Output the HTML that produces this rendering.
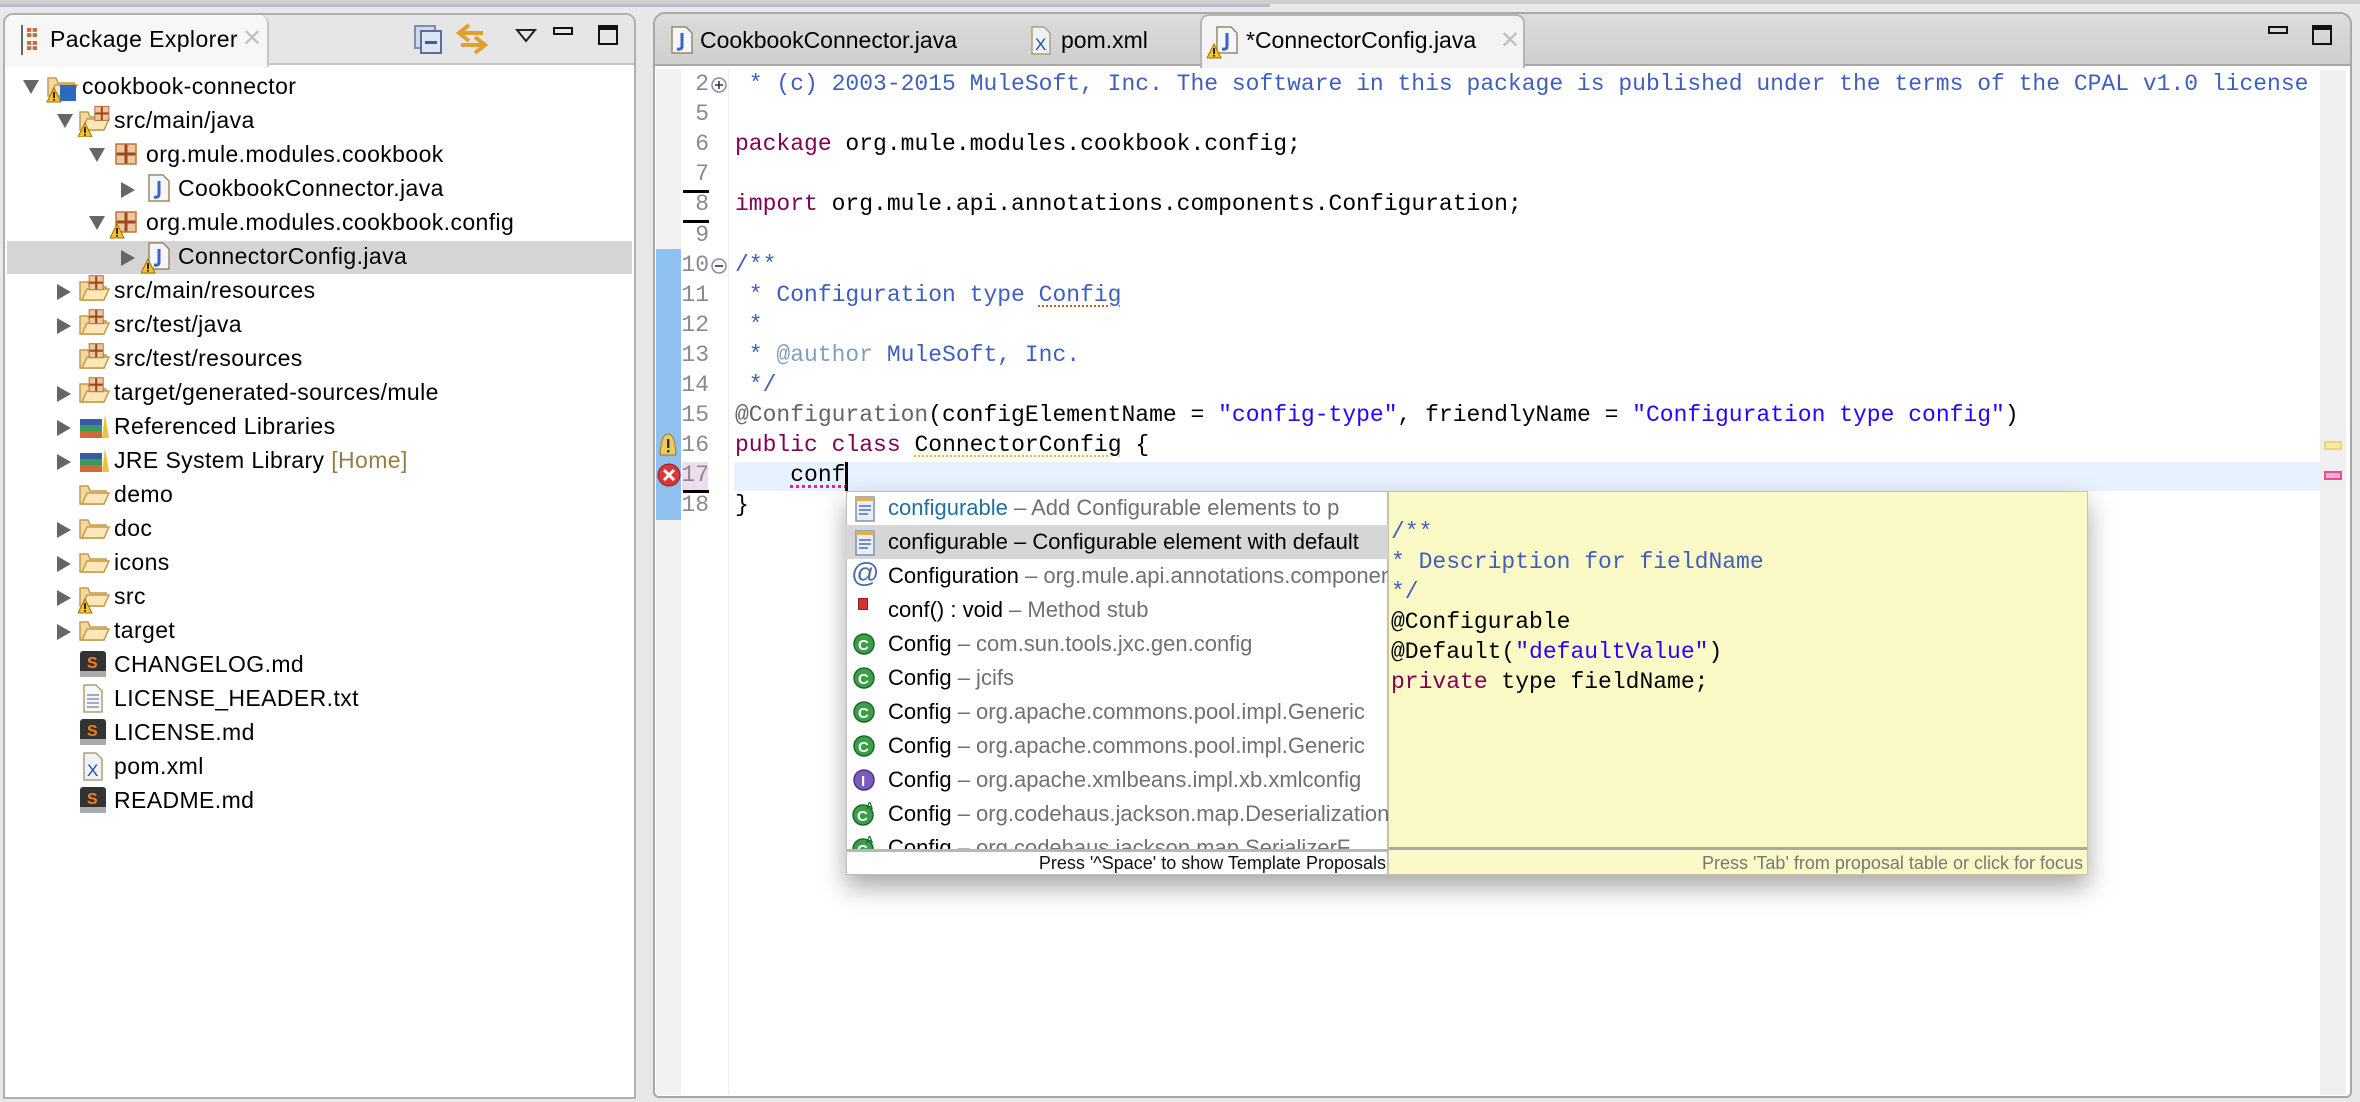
<!DOCTYPE html>
<html><head><meta charset="utf-8"><style>
*{margin:0;padding:0;box-sizing:border-box}
body{width:2360px;height:1102px;background:#e8e8e8;position:relative;overflow:hidden;font-family:"Liberation Sans",sans-serif}
.a{position:absolute}
.t{position:absolute;font-size:23px;white-space:nowrap;color:#000;letter-spacing:0.4px}
.m{position:absolute;font-family:"Liberation Mono",monospace;font-size:23px;white-space:pre;line-height:30px}
.ln{position:absolute;font-family:"Liberation Mono",monospace;font-size:23px;color:#8a8a8a;width:30px;text-align:right;left:679px;line-height:30px}
.kw{color:#7f0055}
.cm{color:#3f5fbf}
.st{color:#2a00ff}
.an{color:#646464}
.pi{position:absolute;font-size:22px;white-space:nowrap;left:888px;line-height:34px;color:#000}
.gr{color:#707070}
</style></head><body>
<div class="a" style="left:0;top:0;width:2360px;height:4px;background:#d0d0d0"></div>
<div class="a" style="left:0;top:4px;width:1270px;height:3px;background:#b8bccb"></div>

<!-- Left panel -->
<div class="a" style="left:3px;top:13px;width:633px;height:1086px;background:#fff;border:2px solid #b0b0b0;border-radius:10px 10px 0 0"></div>
<div class="a" style="left:5px;top:15px;width:629px;height:50px;background:#e6e6e6;border-radius:9px 9px 0 0;border-bottom:2px solid #c4c4c4"></div>
<div class="a" style="left:5px;top:15px;width:264px;height:52px;background:#f7f7f7;border-radius:9px 9px 0 0;border-right:2px solid #c8c8c8"></div>
<svg class="a" style="left:20px;top:25px" width="20" height="30"><rect x="1" y="0" width="2" height="30" fill="#666"/><rect x="7" y="3" width="10" height="9" fill="#c07040"/><rect x="7" y="16" width="10" height="9" fill="#c07040"/><path d="M7 7.5h10M12 3v9M7 20.5h10M12 16v9" stroke="#fff" stroke-width="1.2"/></svg>
<div class="t" style="left:50px;top:26px;font-size:23px">Package Explorer</div>
<div class="t" style="left:242px;top:24px;color:#c0c0c0;font-size:24px">✕</div>
<svg class="a" style="left:413px;top:24px" width="30" height="30"><rect x="2" y="2" width="20" height="22" fill="#cfd9e8" stroke="#7c8fb0" stroke-width="2"/><rect x="8" y="7" width="20" height="22" fill="#dde6f2" stroke="#5c6f99" stroke-width="2"/><rect x="12" y="17" width="12" height="3" fill="#3060b0"/></svg>
<svg class="a" style="left:455px;top:22px" width="34" height="34"><path d="M14 3 L4 11 L14 19 M4 11 H28 M20 15 L30 23 L20 31 M30 23 H6" stroke="#e0a030" stroke-width="4" fill="none"/></svg>
<svg class="a" style="left:515px;top:28px" width="22" height="16"><path d="M2 2 H20 L11 13 Z" fill="none" stroke="#222" stroke-width="2"/></svg>
<div class="a" style="left:553px;top:27px;width:20px;height:8px;border:2px solid #111"></div>
<div class="a" style="left:598px;top:25px;width:20px;height:20px;border:2px solid #111;border-top-width:5px"></div>

<!-- selection -->
<div class="a" style="left:7px;top:241px;width:625px;height:33px;background:#d5d5d5"></div>

<svg width="0" height="0" style="position:absolute"><defs>
<g id="fold"><path d="M2 7 L2 25 L26 25 L28 12 L12 12 L10 7 Z" fill="#f3d9a0" stroke="#c49a4c" stroke-width="1.5"/><path d="M4 25 L9 14 L31 14 L26 25 Z" fill="#fbe7b8" stroke="#c49a4c" stroke-width="1.5"/></g>
<g id="pkg"><rect x="4" y="5" width="20" height="20" fill="#ecc7a0"/><path d="M4 15 H24 M14 5 V25" stroke="#9c4a1c" stroke-width="3"/><rect x="4" y="5" width="20" height="20" fill="none" stroke="#c07040" stroke-width="1.5"/></g>
<g id="jf"><path d="M4 2 H18 L24 8 V28 H4 Z" fill="#f4f6fb" stroke="#9a8a60" stroke-width="1.5"/><path d="M14 8 V21 Q14 25 9 24" stroke="#3a64c0" stroke-width="3" fill="none"/></g>
<g id="warn"><path d="M7 0 L14 14 H0 Z" fill="#f4c430" stroke="#a07000" stroke-width="1"/><rect x="6.2" y="4" width="1.6" height="6" fill="#000"/><rect x="6.2" y="11" width="1.6" height="1.6" fill="#000"/></g>
<g id="lib"><rect x="2" y="8" width="22" height="6" fill="#3a5aa8"/><rect x="2" y="14" width="22" height="6" fill="#3a9a5a"/><rect x="2" y="20" width="22" height="7" fill="#d06a3a"/><path d="M24 27 L27 3 L31 27 Z" fill="#f0c040"/></g>
<g id="md"><rect x="2" y="2" width="26" height="26" rx="3" fill="#333"/><rect x="2" y="22" width="26" height="6" fill="#aaa"/><text x="9" y="19" font-size="16" font-family="Liberation Sans" font-weight="bold" fill="#f08020">S</text></g>
<g id="txt"><path d="M6 2 H18 L24 8 V29 H6 Z" fill="#f6f6fb" stroke="#b0a070" stroke-width="1.5"/><path d="M9 12H21M9 16H21M9 20H21M9 24H21" stroke="#8090c0" stroke-width="1.5"/></g>
<g id="xml"><path d="M6 2 H18 L24 8 V29 H6 Z" fill="#eef2fa" stroke="#b0a070" stroke-width="1.5"/><text x="9" y="25" font-size="17" font-family="Liberation Sans" fill="#2050a0">X</text></g>
<g id="ar"><path d="M0 0 L14 8 L0 16 Z" fill="#666"/></g>
<g id="ad"><path d="M0 0 L16 0 L8 14 Z" fill="#666"/></g>
</defs></svg>

<!-- tree rows: top = 69+34i -->
<!-- row0 -->
<svg class="a" style="left:23px;top:80px" width="18" height="16"><use href="#ad"/></svg>
<svg class="a" style="left:46px;top:71px" width="32" height="32"><use href="#fold"/><rect x="14" y="14" width="16" height="16" fill="#2a6ac0"/><use href="#warn" x="1" y="17"/></svg>
<div class="t" style="left:82px;top:73px">cookbook-connector</div>
<!-- row1 -->
<svg class="a" style="left:57px;top:114px" width="18" height="16"><use href="#ad"/></svg>
<svg class="a" style="left:78px;top:105px" width="34" height="32"><use href="#fold"/><use href="#pkg" x="8" y="-3" transform="scale(0.7) translate(12,0)"/><use href="#warn" x="0" y="18"/></svg>
<div class="t" style="left:114px;top:107px">src/main/java</div>
<!-- row2 -->
<svg class="a" style="left:89px;top:148px" width="18" height="16"><use href="#ad"/></svg>
<svg class="a" style="left:112px;top:139px" width="30" height="30"><use href="#pkg"/></svg>
<div class="t" style="left:146px;top:141px">org.mule.modules.cookbook</div>
<!-- row3 -->
<svg class="a" style="left:121px;top:182px" width="16" height="18"><use href="#ar"/></svg>
<svg class="a" style="left:145px;top:173px" width="30" height="32"><use href="#jf"/></svg>
<div class="t" style="left:178px;top:175px">CookbookConnector.java</div>
<!-- row4 -->
<svg class="a" style="left:89px;top:216px" width="18" height="16"><use href="#ad"/></svg>
<svg class="a" style="left:110px;top:207px" width="32" height="32"><use href="#pkg" x="2"/><use href="#warn" x="0" y="17"/></svg>
<div class="t" style="left:146px;top:209px">org.mule.modules.cookbook.config</div>
<!-- row5 -->
<svg class="a" style="left:121px;top:250px" width="16" height="18"><use href="#ar"/></svg>
<svg class="a" style="left:141px;top:241px" width="32" height="33"><use href="#jf" x="4"/><use href="#warn" x="0" y="18"/></svg>
<div class="t" style="left:178px;top:243px">ConnectorConfig.java</div>

<!-- level1 rows -->
<svg class="a" style="left:57px;top:284px" width="16" height="18"><use href="#ar"/></svg>
<svg class="a" style="left:78px;top:275px" width="34" height="32"><use href="#fold"/><use href="#pkg" transform="scale(0.7) translate(12,-4)"/></svg>
<div class="t" style="left:114px;top:277px">src/main/resources</div>

<svg class="a" style="left:57px;top:318px" width="16" height="18"><use href="#ar"/></svg>
<svg class="a" style="left:78px;top:309px" width="34" height="32"><use href="#fold"/><use href="#pkg" transform="scale(0.7) translate(12,-4)"/></svg>
<div class="t" style="left:114px;top:311px">src/test/java</div>

<svg class="a" style="left:78px;top:343px" width="34" height="32"><use href="#fold"/><use href="#pkg" transform="scale(0.7) translate(12,-4)"/></svg>
<div class="t" style="left:114px;top:345px">src/test/resources</div>

<svg class="a" style="left:57px;top:386px" width="16" height="18"><use href="#ar"/></svg>
<svg class="a" style="left:78px;top:377px" width="34" height="32"><use href="#fold"/><use href="#pkg" transform="scale(0.7) translate(12,-4)"/></svg>
<div class="t" style="left:114px;top:379px">target/generated-sources/mule</div>

<svg class="a" style="left:57px;top:420px" width="16" height="18"><use href="#ar"/></svg>
<svg class="a" style="left:78px;top:411px" width="34" height="32"><use href="#lib"/></svg>
<div class="t" style="left:114px;top:413px">Referenced Libraries</div>

<svg class="a" style="left:57px;top:454px" width="16" height="18"><use href="#ar"/></svg>
<svg class="a" style="left:78px;top:445px" width="34" height="32"><use href="#lib"/></svg>
<div class="t" style="left:114px;top:447px">JRE System Library <span style="color:#957d47">[Home]</span></div>

<svg class="a" style="left:78px;top:479px" width="34" height="32"><use href="#fold"/></svg>
<div class="t" style="left:114px;top:481px">demo</div>

<svg class="a" style="left:57px;top:522px" width="16" height="18"><use href="#ar"/></svg>
<svg class="a" style="left:78px;top:513px" width="34" height="32"><use href="#fold"/></svg>
<div class="t" style="left:114px;top:515px">doc</div>

<svg class="a" style="left:57px;top:556px" width="16" height="18"><use href="#ar"/></svg>
<svg class="a" style="left:78px;top:547px" width="34" height="32"><use href="#fold"/></svg>
<div class="t" style="left:114px;top:549px">icons</div>

<svg class="a" style="left:57px;top:590px" width="16" height="18"><use href="#ar"/></svg>
<svg class="a" style="left:78px;top:581px" width="34" height="33"><use href="#fold"/><use href="#warn" x="0" y="18"/></svg>
<div class="t" style="left:114px;top:583px">src</div>

<svg class="a" style="left:57px;top:624px" width="16" height="18"><use href="#ar"/></svg>
<svg class="a" style="left:78px;top:615px" width="34" height="32"><use href="#fold"/></svg>
<div class="t" style="left:114px;top:617px">target</div>

<svg class="a" style="left:78px;top:649px" width="32" height="32"><use href="#md"/></svg>
<div class="t" style="left:114px;top:651px">CHANGELOG.md</div>
<svg class="a" style="left:78px;top:683px" width="32" height="32"><use href="#txt"/></svg>
<div class="t" style="left:114px;top:685px">LICENSE_HEADER.txt</div>
<svg class="a" style="left:78px;top:717px" width="32" height="32"><use href="#md"/></svg>
<div class="t" style="left:114px;top:719px">LICENSE.md</div>
<svg class="a" style="left:78px;top:751px" width="32" height="32"><use href="#xml"/></svg>
<div class="t" style="left:114px;top:753px">pom.xml</div>
<svg class="a" style="left:78px;top:785px" width="32" height="32"><use href="#md"/></svg>
<div class="t" style="left:114px;top:787px">README.md</div>

<!-- Editor -->
<div class="a" style="left:653px;top:12px;width:1699px;height:1086px;background:#fff;border:2px solid #a8a8a8;border-radius:12px 12px 6px 6px"></div>
<div class="a" style="left:655px;top:14px;width:1695px;height:52px;background:linear-gradient(#dcdcdc,#cfcfcf);border-radius:10px 10px 0 0;border-bottom:2px solid #a8a8a8"></div>
<div class="a" style="left:1200px;top:14px;width:325px;height:54px;background:#f3f3f3;border:2px solid #b5b5b5;border-bottom:none;border-radius:9px 9px 0 0"></div>
<svg class="a" style="left:668px;top:25px" width="30" height="32"><use href="#jf"/></svg>
<div class="t" style="left:700px;top:27px;font-size:23px;letter-spacing:0">CookbookConnector.java</div>
<svg class="a" style="left:1026px;top:25px" width="30" height="32"><use href="#xml"/></svg>
<div class="t" style="left:1061px;top:27px;font-size:23px;letter-spacing:0">pom.xml</div>
<svg class="a" style="left:1207px;top:25px" width="34" height="34"><use href="#jf" x="6"/><use href="#warn" x="0" y="19"/></svg>
<div class="t" style="left:1246px;top:27px;font-size:23px;letter-spacing:0">*ConnectorConfig.java</div>
<div class="t" style="left:1500px;top:26px;color:#c0c0c0;font-size:24px">✕</div>
<div class="a" style="left:2268px;top:26px;width:20px;height:8px;border:2px solid #111"></div>
<div class="a" style="left:2312px;top:25px;width:20px;height:20px;border:2px solid #111;border-top-width:5px"></div>

<!-- gutter -->
<div class="a" style="left:656px;top:69px;width:25px;height:1026px;background:#f2f2f2"></div>
<div class="a" style="left:656px;top:249px;width:25px;height:271px;background:#8fc1f0"></div>
<div class="a" style="left:728px;top:69px;width:1px;height:1026px;background:#ececec"></div>
<div class="a" style="left:2320px;top:70px;width:26px;height:1025px;background:#efefef"></div>
<div class="a" style="left:2324px;top:441px;width:18px;height:9px;background:#fbe9b0;border:2px solid #f7d070"></div>
<div class="a" style="left:2324px;top:471px;width:18px;height:9px;background:#f2b0d0;border:2px solid #ea4c9a"></div>
<!-- current line -->
<div class="a" style="left:734px;top:462px;width:1586px;height:29px;background:#e8f2fe"></div>
<div class="a" style="left:682px;top:462px;width:26px;height:29px;background:#efdcef"></div>

<!-- line numbers; top = 69+30.1i -->
<div class="ln" style="top:69px">2</div>
<div class="ln" style="top:99px">5</div>
<div class="ln" style="top:129px">6</div>
<div class="ln" style="top:159px">7</div>
<div class="ln" style="top:189px">8</div>
<div class="ln" style="top:220px">9</div>
<div class="ln" style="top:250px">10</div>
<div class="ln" style="top:280px">11</div>
<div class="ln" style="top:310px">12</div>
<div class="ln" style="top:340px">13</div>
<div class="ln" style="top:370px">14</div>
<div class="ln" style="top:400px">15</div>
<div class="ln" style="top:430px">16</div>
<div class="ln" style="top:460px">17</div>
<div class="ln" style="top:490px">18</div>
<div class="a" style="left:683px;top:190px;width:26px;height:3px;background:#000"></div>
<div class="a" style="left:683px;top:220px;width:26px;height:3px;background:#000"></div>
<div class="a" style="left:683px;top:490px;width:26px;height:3px;background:#000"></div>
<svg class="a" style="left:710px;top:76px" width="18" height="18"><circle cx="9" cy="9" r="7" fill="#fff" stroke="#8090a8" stroke-width="1.5"/><path d="M5 9H13M9 5V13" stroke="#334" stroke-width="1.6"/></svg>
<svg class="a" style="left:710px;top:257px" width="18" height="18"><circle cx="9" cy="9" r="7" fill="#fff" stroke="#8090a8" stroke-width="1.5"/><path d="M5 9H13" stroke="#334" stroke-width="1.6"/></svg>
<svg class="a" style="left:658px;top:433px" width="20" height="24"><path d="M10 1 C4 1 3 10 2 22 H18 C17 10 16 1 10 1Z" fill="#f0c860" stroke="#a07828" stroke-width="1"/><rect x="9" y="6" width="2.4" height="9" fill="#333"/><rect x="9" y="17" width="2.4" height="2.4" fill="#333"/></svg>
<svg class="a" style="left:657px;top:463px" width="24" height="24"><circle cx="12" cy="12" r="11" fill="#d83838" stroke="#a01818"/><path d="M7 7L17 17M17 7L7 17" stroke="#fff" stroke-width="3"/></svg>

<!-- code -->
<div class="m cm" style="left:735px;top:69px;width:1585px;overflow:hidden"> * (c) 2003-2015 MuleSoft, Inc. The software in this package is published under the terms of the CPAL v1.0 license</div>
<div class="m" style="left:735px;top:129px"><span class="kw">package</span> org.mule.modules.cookbook.config;</div>
<div class="m" style="left:735px;top:189px"><span class="kw">import</span> org.mule.api.annotations.components.Configuration;</div>
<div class="m cm" style="left:735px;top:250px">/**</div>
<div class="m cm" style="left:735px;top:280px"> * Configuration type <span style="text-decoration:underline dotted #e05020 2px;text-underline-offset:4px">Config</span></div>
<div class="m cm" style="left:735px;top:310px"> *</div>
<div class="m cm" style="left:735px;top:340px"> * <span style="color:#7f9fbf">@author</span> MuleSoft, Inc.</div>
<div class="m cm" style="left:735px;top:370px"> */</div>
<div class="m" style="left:735px;top:400px"><span class="an">@Configuration</span>(configElementName = <span class="st">"config-type"</span>, friendlyName = <span class="st">"Configuration type config"</span>)</div>
<div class="m" style="left:735px;top:430px"><span class="kw">public</span> <span class="kw">class</span> <span style="text-decoration:underline dotted #f0c020 2px;text-underline-offset:4px">ConnectorConfig</span> {</div>
<div class="m" style="left:735px;top:460px">    <span style="text-decoration:underline dotted #f0208a 3px;text-underline-offset:4px">conf</span></div>
<div class="a" style="left:845px;top:462px;width:3px;height:29px;background:#000"></div>
<div class="m" style="left:735px;top:490px">}</div>

<!-- popup -->
<div class="a" style="left:846px;top:491px;width:1242px;height:384px;box-shadow:0 12px 24px rgba(0,0,0,0.35)"></div>
<div class="a" style="left:846px;top:491px;width:542px;height:384px;background:#fff;border:1px solid #bdbdbd;overflow:hidden">
</div>
<div class="a" style="left:846px;top:525px;width:542px;height:34px;background:#d6d6d6"></div>
<div class="a" style="left:846px;top:491px;width:542px;height:359px;overflow:hidden">
<svg class="a" style="left:8px;top:4px" width="22" height="28"><rect x="2" y="2" width="18" height="24" fill="#e8eef8" stroke="#8090b0" stroke-width="1.5"/><rect x="2" y="2" width="18" height="4" fill="#e0b050"/><path d="M5 11H17M5 15H17M5 19H14" stroke="#5070a0" stroke-width="1.5"/></svg>
<svg class="a" style="left:8px;top:38px" width="22" height="28"><rect x="2" y="2" width="18" height="24" fill="#e8eef8" stroke="#8090b0" stroke-width="1.5"/><rect x="2" y="2" width="18" height="4" fill="#e0b050"/><path d="M5 11H17M5 15H17M5 19H14" stroke="#5070a0" stroke-width="1.5"/></svg>
<div class="a" style="left:5px;top:66px;font-size:28px;color:#4a6fa0;font-family:'Liberation Sans'">@</div>
<div class="a" style="left:12px;top:107px;width:10px;height:12px;background:#d83030;border:1px solid #902020"></div>
<svg class="a" style="left:6px;top:140px" width="24" height="26"><circle cx="12" cy="13" r="10" fill="#3aa048" stroke="#1c6a28" stroke-width="1.5"/><text x="6" y="19" font-size="15" font-weight="bold" font-family="Liberation Sans" fill="#fff">C</text></svg>
<svg class="a" style="left:6px;top:174px" width="24" height="26"><circle cx="12" cy="13" r="10" fill="#3aa048" stroke="#1c6a28" stroke-width="1.5"/><text x="6" y="19" font-size="15" font-weight="bold" font-family="Liberation Sans" fill="#fff">C</text></svg>
<svg class="a" style="left:6px;top:208px" width="24" height="26"><circle cx="12" cy="13" r="10" fill="#3aa048" stroke="#1c6a28" stroke-width="1.5"/><text x="6" y="19" font-size="15" font-weight="bold" font-family="Liberation Sans" fill="#fff">C</text></svg>
<svg class="a" style="left:6px;top:242px" width="24" height="26"><circle cx="12" cy="13" r="10" fill="#3aa048" stroke="#1c6a28" stroke-width="1.5"/><text x="6" y="19" font-size="15" font-weight="bold" font-family="Liberation Sans" fill="#fff">C</text></svg>
<svg class="a" style="left:6px;top:276px" width="24" height="26"><circle cx="12" cy="13" r="10" fill="#7a5cc0" stroke="#4a308a" stroke-width="1.5"/><text x="9" y="19" font-size="15" font-weight="bold" font-family="Liberation Sans" fill="#fff">I</text></svg>
<svg class="a" style="left:6px;top:308px" width="24" height="28"><circle cx="11" cy="16" r="10" fill="#3aa048" stroke="#1c6a28" stroke-width="1.5"/><text x="5" y="22" font-size="15" font-weight="bold" font-family="Liberation Sans" fill="#fff">C</text><text x="14" y="10" font-size="10" font-weight="bold" font-family="Liberation Sans" fill="#1c6a28">A</text></svg>
<svg class="a" style="left:6px;top:342px" width="24" height="28"><circle cx="11" cy="16" r="10" fill="#3aa048" stroke="#1c6a28" stroke-width="1.5"/><text x="5" y="22" font-size="15" font-weight="bold" font-family="Liberation Sans" fill="#fff">C</text><text x="14" y="10" font-size="10" font-weight="bold" font-family="Liberation Sans" fill="#1c6a28">A</text></svg>
<div class="pi" style="left:42px;top:0"><span style="color:#1f6fa0">configurable</span><span class="gr"> – Add Configurable elements to p</span></div>
<div class="pi" style="left:42px;top:34px">configurable – Configurable element with default</div>
<div class="pi" style="left:42px;top:68px">Configuration<span class="gr"> – org.mule.api.annotations.components</span></div>
<div class="pi" style="left:42px;top:102px">conf() : void<span class="gr"> – Method stub</span></div>
<div class="pi" style="left:42px;top:136px">Config<span class="gr"> – com.sun.tools.jxc.gen.config</span></div>
<div class="pi" style="left:42px;top:170px">Config<span class="gr"> – jcifs</span></div>
<div class="pi" style="left:42px;top:204px">Config<span class="gr"> – org.apache.commons.pool.impl.Generic</span></div>
<div class="pi" style="left:42px;top:238px">Config<span class="gr"> – org.apache.commons.pool.impl.Generic</span></div>
<div class="pi" style="left:42px;top:272px">Config<span class="gr"> – org.apache.xmlbeans.impl.xb.xmlconfig</span></div>
<div class="pi" style="left:42px;top:306px">Config<span class="gr"> – org.codehaus.jackson.map.Deserialization</span></div>
<div class="pi" style="left:42px;top:340px">Config<span class="gr"> – org.codehaus.jackson.map.SerializerF</span></div>
</div>
<div class="a" style="left:846px;top:849px;width:542px;height:3px;background:#b8b8b8"></div>
<div class="a" style="left:846px;top:852px;width:540px;height:23px;font-size:18px;text-align:right;line-height:23px;color:#111;white-space:nowrap">Press '^Space' to show Template Proposals</div>
<!-- doc -->
<div class="a" style="left:1388px;top:491px;width:700px;height:384px;background:#fbf9c6;border:1px solid #c8c8a0"></div>
<div class="m cm" style="left:1391px;top:517px">/**</div>
<div class="m cm" style="left:1391px;top:547px">* Description for fieldName</div>
<div class="m cm" style="left:1391px;top:577px">*/</div>
<div class="m" style="left:1391px;top:607px">@Configurable</div>
<div class="m" style="left:1391px;top:637px">@Default(<span class="st">"defaultValue"</span>)</div>
<div class="m" style="left:1391px;top:667px"><span class="kw">private</span> type fieldName;</div>
<div class="a" style="left:1389px;top:847px;width:698px;height:3px;background:#a8a8a0"></div>
<div class="a" style="left:1389px;top:852px;width:694px;height:23px;font-size:18px;text-align:right;line-height:23px;color:#777;white-space:nowrap">Press 'Tab' from proposal table or click for focus</div>
</body></html>
